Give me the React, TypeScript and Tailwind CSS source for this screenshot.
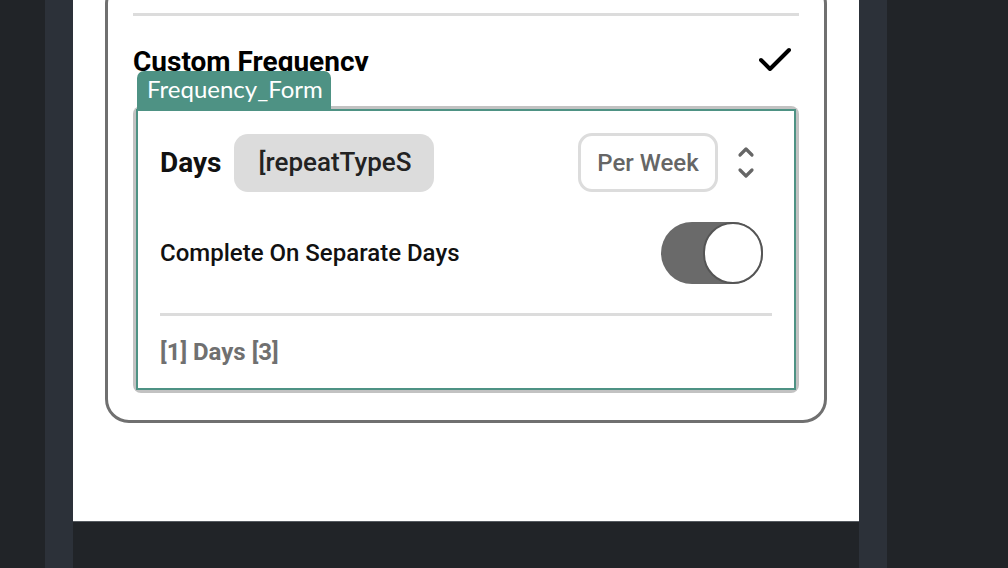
export default function App() {
  return (
    <div className="flex h-[568px] w-[1008px] overflow-hidden bg-[#212428] font-['Roboto',sans-serif]">
      <div className="w-[45px] shrink-0 bg-[#212428]" />
      <div className="w-[28px] shrink-0 bg-[#2c3139]" />
      {/* main panel */}
      <div className="flex w-[786px] shrink-0 flex-col">
        <div className="h-[521px] overflow-hidden bg-white px-[32px]">
          <div className="mt-[-20px] rounded-[24px] border-[3px] border-[#707070] px-[25px] pt-[30px] pb-[27px]">
            <div className="h-[3px] bg-[#dcdcdc]" />
            {/* header */}
            <div className="mt-[20px] flex h-[35px] items-start justify-between overflow-hidden">
              <h2 className="text-[28px] leading-[51px] font-bold text-black">Custom Frequency</h2>
              <svg width="32" height="26" viewBox="0 0 32 26" className="mt-[11px] mr-[8px]">
                <polyline points="2,13 11,22 30,3" fill="none" stroke="black" strokeWidth="4" strokeLinecap="round" strokeLinejoin="round" />
              </svg>
            </div>
            {/* tab */}
            <div className="relative z-10 ml-[4px] flex h-[39px] w-[194px] items-start rounded-t-[7px] bg-[#4e9284] pl-[10px] pt-[3px]">
              <span className="font-['Lato',sans-serif] text-[24px] leading-[30px] text-white">Frequency_Form</span>
            </div>
            {/* frame */}
            <div className="mt-[-4px] rounded-[8px] bg-[#c2c2c2] p-[3px]">
              <div className="border-2 border-[#4e9284] bg-white px-[22px] pt-[22px] pb-[18px]">
                <div className="flex items-center">
                  <span className="text-[28px] font-bold text-[#111]">Days</span>
                  <div className="ml-[13px] flex h-[58px] w-[200px] items-center rounded-[14px] bg-[#dcdcdc] pl-[24px]">
                    <span className="text-[26px] font-medium text-[#222]">[repeatTypeS</span>
                  </div>
                  <div className="ml-auto flex h-[59px] w-[140px] items-center justify-center rounded-[14px] border-[3px] border-[#dcdcdc]">
                    <span className="text-[24px] font-medium text-[#666]">Per Week</span>
                  </div>
                  <svg width="18" height="34" viewBox="0 0 18 34" className="mr-[17px] ml-[19px]">
                    <polyline points="3,9 9,3 15,9" fill="none" stroke="#666" strokeWidth="3.2" strokeLinecap="round" strokeLinejoin="round" />
                    <polyline points="3,24 9,30 15,24" fill="none" stroke="#666" strokeWidth="3.2" strokeLinecap="round" strokeLinejoin="round" />
                  </svg>
                </div>
                <div className="mt-[30px] flex items-center justify-between">
                  <span className="text-[24px] font-medium text-[#111]">Complete On Separate Days</span>
                  <div className="mr-[9px] flex h-[62px] w-[102px] items-center justify-end rounded-full bg-[#6a6a6a]">
                    <div className="h-[62px] w-[60px] rounded-full border-2 border-[#555] bg-white" />
                  </div>
                </div>
                <div className="mt-[29px] h-[3px] bg-[#dcdcdc]" />
                <div className="mt-[18px] text-[24px] font-bold text-[#707070]">[1] Days [3]</div>
              </div>
            </div>
          </div>
        </div>
        <div className="h-[1px] bg-[#555a60]" />
        <div className="flex-1 bg-[#212428]" />
      </div>
      <div className="w-[28px] shrink-0 bg-[#2c3139]" />
      <div className="flex-1 bg-[#212428]" />
    </div>
  );
}
